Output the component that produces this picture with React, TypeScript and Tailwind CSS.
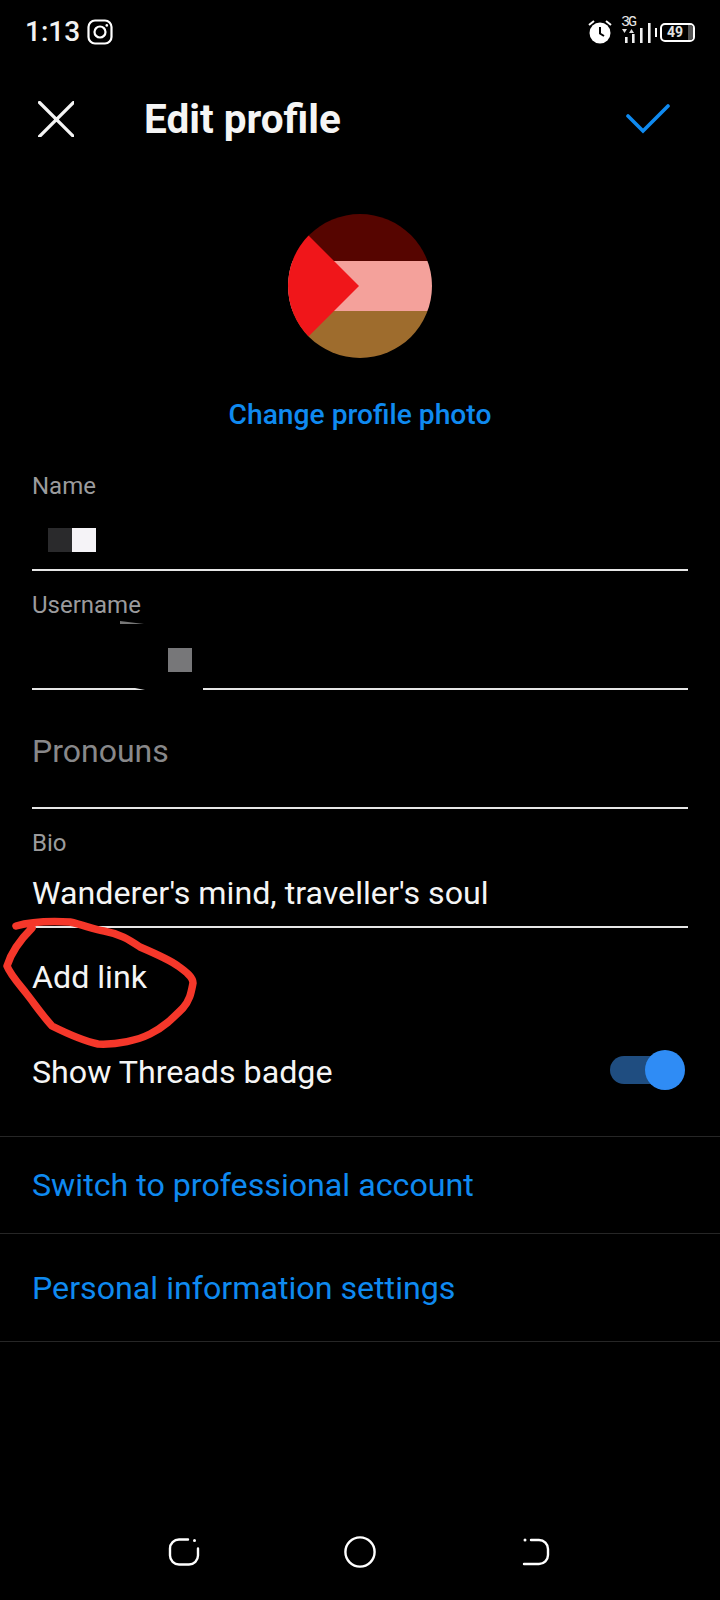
import React from 'react';

const Field = ({ label, children, className }: { label?: string; children?: React.ReactNode; className: string }) => (
  <div className={`flex flex-col border-b-2 border-[#e6e6e6] ${className}`}>
    {label && <span className="-mt-px text-[24px] leading-[32px] text-[#9b9b9d]">{label}</span>}
    {children}
  </div>
);

const StatusIcons = () => (
  <div className="flex items-center">
    {/* alarm */}
    <svg width="26" height="26" viewBox="0 0 26 26" className="mr-[5px]">
      <circle cx="13" cy="14" r="10.5" fill="#fff" />
      <path d="M13 8v6.5l4 2.5" fill="none" stroke="#000" strokeWidth="2" />
      <path d="M2 6l5-4M24 6l-5-4" fill="none" stroke="#fff" strokeWidth="2" />
    </svg>
    {/* signal */}
    <div className="relative w-[33px] h-[28px] mr-[4px]">
      <span className="absolute left-[3px] top-[-2px] text-[15px] leading-[14px] text-[#e8e8e8] font-['Liberation_Mono',monospace] tracking-[-2px]">3G</span>
      <svg width="33" height="28" viewBox="0 0 33 28" className="absolute left-0 top-0">
        <path d="M4 11h5l-2.5 4zM11 15h5l-2.5-4z" fill="#e0e0e0" />
        <path d="M7 19h2.6v6H7zM14 16h2.6v9H14zM22 10h2.6v15H22zM30 5h2.6v20H30z" fill="#f0f0f0" />
      </svg>
    </div>
    <div className="w-[2px] h-[9px] bg-white mr-[3px]" />
    <div className="flex items-center w-[35px] h-[19px] border-2 border-white rounded-[5px] overflow-hidden">
      <div className="flex items-center justify-center w-[26px] h-full text-[14px] leading-none font-bold text-[#e0e0e0]">49</div>
      <div className="flex-1 h-full bg-[#555]" />
    </div>
  </div>
);

export default function App() {
  return (
    <div className="relative flex flex-col w-[720px] h-[1600px] bg-black text-white overflow-hidden font-['Roboto',sans-serif]">
      {/* status bar */}
      <div className="flex items-center justify-between h-[64px] pl-[25px] pr-[25px]">
        <div className="flex items-center gap-[7px]">
          <span className="text-[28px] leading-none font-medium text-[#f2f2f2]">1:13</span>
          <svg width="26" height="26" viewBox="0 0 26 26" fill="none" stroke="#fff" strokeWidth="2.2">
            <rect x="1.5" y="1.5" width="23" height="23" rx="6.5" />
            <circle cx="13" cy="13" r="5.5" />
            <circle cx="19.8" cy="6.4" r="1.3" fill="#fff" stroke="none" />
          </svg>
        </div>
        <StatusIcons />
      </div>

      {/* header */}
      <div className="flex items-center h-[110px] pl-[38px] pr-[50px]">
        <svg width="36" height="36" viewBox="0 0 36 36" stroke="#f5f5f5" strokeWidth="3.2" strokeLinecap="round">
          <path d="M1.5 1.5l34 34M35.5 1.5l-34 34" />
        </svg>
        <h1 className="ml-[70px] text-[40.5px] leading-none font-bold text-[#f5f5f5]">Edit profile</h1>
        <svg width="44" height="30" viewBox="0 0 44 30" fill="none" stroke="#0f8af0" strokeWidth="3.6" strokeLinecap="round" className="ml-auto">
          <path d="M2 12l15 15L42 2" />
        </svg>
      </div>

      {/* avatar */}
      <div className="flex flex-col items-center mt-[40px]">
        <svg width="144" height="144" viewBox="0 0 144 144" className="rounded-full">
          <rect width="144" height="47" fill="#560500" />
          <rect y="47" width="144" height="50" fill="#f4a19b" />
          <rect y="97" width="144" height="47" fill="#9e6c2d" />
          <polygon points="0,1 71,72 0,143" fill="#f0161a" />
        </svg>
        <span className="mt-[41px] text-[28.2px] leading-[32px] font-medium text-[#0f8af0]">Change profile photo</span>
      </div>

      {/* fields */}
      <div className="flex flex-col px-[32px] mt-[40px]">
        <Field label="Name" className="h-[100px]">
          <div className="flex ml-[16px] mt-[26px]">
            <div className="w-[24px] h-[24px] bg-[#2a2a2c]" />
            <div className="w-[24px] h-[24px] bg-[#f5f3f7]" />
          </div>
        </Field>
        <Field label="Username" className="relative h-[100px] mt-[19px]">
          <div className="absolute left-[88px] top-[31px] w-[24px] h-[3px] bg-[#777] [clip-path:polygon(0_0,100%_100%,0_100%)]" />
          <div className="absolute left-[136px] top-[58px] w-[24px] h-[24px] bg-[#777779]" />
          <div className="absolute left-[103px] bottom-[-2px] w-[68px] h-[2px] bg-black [clip-path:polygon(0_0,100%_0,100%_100%,10px_100%)]" />
        </Field>
        <Field className="h-[119px] justify-end pb-[38px]">
          <span className="text-[32px] leading-[36px] text-[#88888a]">Pronouns</span>
        </Field>
        <Field label="Bio" className="h-[119px] justify-start pt-[19px]">
          <span className="mt-[16px] text-[32.2px] leading-[36px] text-[#f5f5f5]">Wanderer's mind, traveller's soul</span>
        </Field>
        <div className="mt-[29px] text-[32.2px] leading-[40px] text-[#f5f5f5]">Add link</div>
        <div className="flex items-center justify-between mt-[54px] h-[40px] text-[32.2px] text-[#f5f5f5]">
          <span className="mt-[2px]">Show Threads badge</span>
          <div className="flex items-center mr-[3px] mb-[2px]">
            <div className="w-[50px] h-[28px] rounded-l-full bg-[#1f4d80]" />
            <div className="w-[40px] h-[40px] rounded-full bg-[#2f8cf5] -ml-[15px]" />
          </div>
        </div>
      </div>

      {/* links */}
      <div className="flex flex-col mt-[45px] text-[32.2px] text-[#0f8af0]">
        <div className="flex items-center h-[97px] pl-[32px] border-t border-[#262626]">Switch to professional account</div>
        <div className="flex items-center h-[108px] pl-[32px] pt-[2px] border-t border-[#262626]">Personal information settings</div>
        <div className="border-t border-[#262626]" />
      </div>

      {/* nav bar */}
      <div className="flex items-center justify-between mt-auto mb-[32px] pl-[168px] pr-[170px]">
        <svg width="32" height="30" viewBox="0 0 32 30" fill="none" stroke="#fff" strokeWidth="2.4" strokeLinecap="round">
          <path d="M20 2.5H11a9 9 0 0 0-9 9v7a9 9 0 0 0 9 9h10a9 9 0 0 0 9-9v-7" />
          <circle cx="26.5" cy="3.5" r="1.5" fill="#fff" stroke="none" />
        </svg>
        <svg width="32" height="32" viewBox="0 0 32 32" fill="none" stroke="#fff" strokeWidth="2.4" className="mr-[2px]">
          <circle cx="16" cy="16" r="14.6" />
        </svg>
        <svg width="28" height="30" viewBox="0 0 28 30" fill="none" stroke="#fff" strokeWidth="2.4" strokeLinecap="round">
          <path d="M9 3h8a9 9 0 0 1 9 9v6a9 9 0 0 1-9 9H2" />
          <circle cx="3" cy="3" r="1.5" fill="#fff" stroke="none" />
        </svg>
      </div>

      {/* red annotation drawn over the screenshot */}
      <svg width="220" height="140" viewBox="0 910 220 140" fill="none" stroke="#f5372a" strokeWidth="7.5" strokeLinecap="round" strokeLinejoin="round" className="absolute left-0 top-[910px]">
        <path d="M16 926C30 922 52 921 70 922C84 925 92 929 104 931C120 934 128 939 140 947C154 953 170 960 178 966C188 973 193 978 193 983C191 993 190 1000 183 1008C172 1019 164 1027 150 1034C138 1040 118 1045 98 1044C84 1041 68 1034 52 1026C42 1015 34 1003 26 993C18 983 10 974 7 966C10 956 18 942 32 928" />
      </svg>
    </div>
  );
}
